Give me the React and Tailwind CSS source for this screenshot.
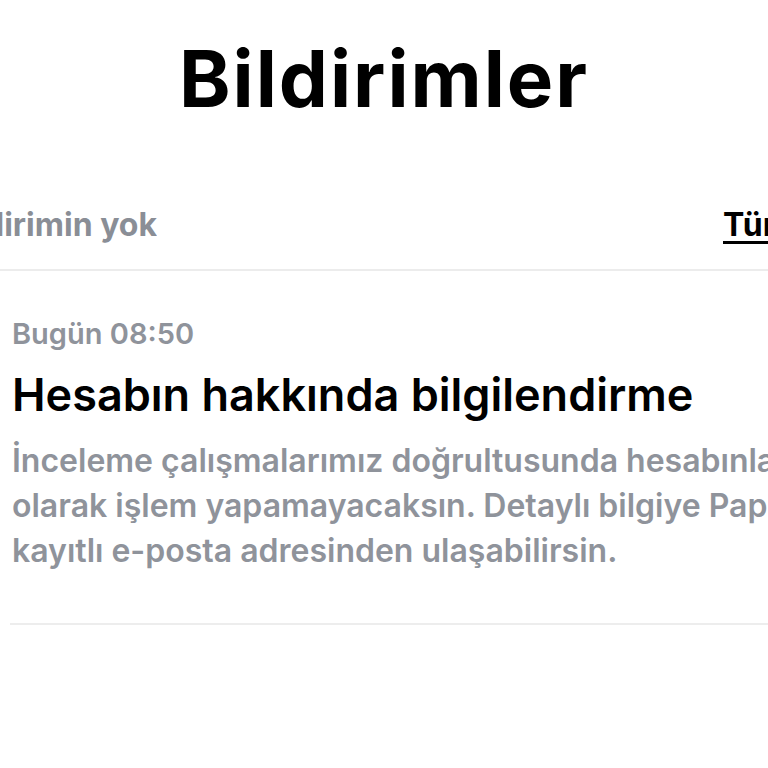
export default function App() {
  return (
    <div className="w-[768px] h-[768px] overflow-hidden bg-white" style={{ fontFamily: "Inter, 'Noto Sans', sans-serif" }}>
      <div className="h-[160px] flex items-start justify-center pt-[33px]">
        <h1 className="text-[78px] leading-[92px] font-bold text-black tracking-[2px] whitespace-nowrap">Bildirimler</h1>
      </div>
      <div className="h-[111px] flex items-start pt-[45px] border-b-2 border-[#ececec]">
        <div className="w-[157px] shrink-0 flex justify-end overflow-hidden whitespace-nowrap">
          <span className="text-[32px] leading-[40px] font-bold text-[#8a8e96]">Okunmamış bildirimin yok</span>
        </div>
        <div className="flex-1" />
        <div className="w-[45px] shrink-0 overflow-hidden whitespace-nowrap">
          <span className="text-[32px] leading-[40px] font-bold text-black underline underline-offset-[5px] decoration-[3px]">Tümünü okundu say</span>
        </div>
      </div>
      <div className="pl-[10px]">
        <div className="pt-[46px] pb-[50px] border-b-2 border-[#ededed] whitespace-nowrap">
          <div className="pl-[2px] text-[29px] leading-[34px] font-semibold text-[#8f939b]">Bugün 08:50</div>
          <div className="pl-[2px] mt-[17px] text-[45px] leading-[54px] font-semibold text-black">Hesabın hakkında bilgilendirme</div>
          <div className="pl-[2px] mt-[16px] text-[32px] leading-[45px] font-semibold text-[#8f939b]">
            <div>İnceleme çalışmalarımız doğrultusunda hesabınla ilgili geçici</div>
            <div>olarak işlem yapamayacaksın. Detaylı bilgiye Papara'ya</div>
            <div>kayıtlı e-posta adresinden ulaşabilirsin.</div>
          </div>
        </div>
      </div>
    </div>
  );
}
